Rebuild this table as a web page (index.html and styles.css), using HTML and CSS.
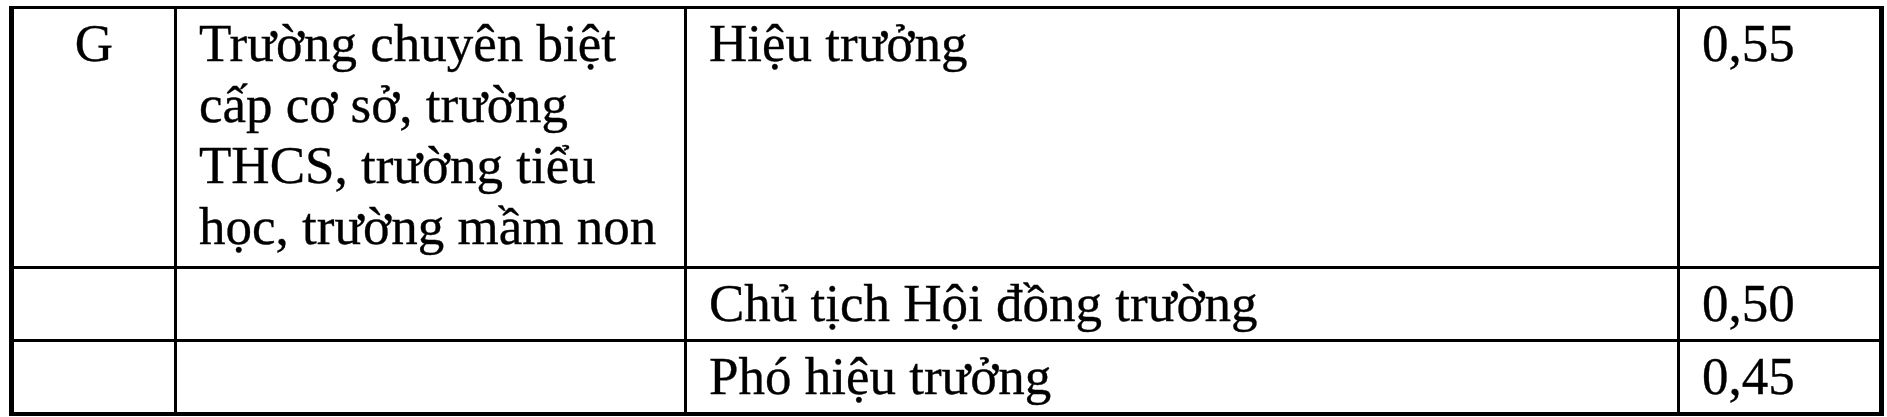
FILE: index.html
```html
<!DOCTYPE html>
<html lang="vi">
<head>
<meta charset="utf-8">
<title>Bảng hệ số</title>
<link rel="stylesheet" href="styles.css">
</head>
<body>
<table class="grid">
  <colgroup>
    <col class="c-code">
    <col class="c-unit">
    <col class="c-role">
    <col class="c-coef">
  </colgroup>
  <tbody>
    <tr class="row-main">
      <td class="code">G</td>
      <td>Trường chuyên biệt cấp cơ sở, trường THCS, trường tiểu học, trường mầm non</td>
      <td>Hiệu trưởng</td>
      <td>0,55</td>
    </tr>
    <tr>
      <td class="code"></td>
      <td></td>
      <td>Chủ tịch Hội đồng trường</td>
      <td>0,50</td>
    </tr>
    <tr>
      <td class="code"></td>
      <td></td>
      <td>Phó hiệu trưởng</td>
      <td>0,45</td>
    </tr>
  </tbody>
</table>
</body>
</html>
```

FILE: styles.css
```css
html, body {
  margin: 0;
  padding: 0;
  background: #ffffff;
}

body {
  padding: 6px 0 0 9px;
}

.grid {
  border-collapse: collapse;
  table-layout: fixed;
  width: 1870px;
  border-top: 3px solid #000;
  border-left: 5px solid #000;
  border-right: 5px solid #000;
  border-bottom: 4px solid #000;
  font-family: "Liberation Serif", "Times New Roman", serif;
  font-size: 53px;
  line-height: 61px;
  color: #000;
  -webkit-text-stroke: 0.35px #000;
}

.c-code { width: 164px; }
.c-unit { width: 510px; }
.c-role { width: 993px; }
.c-coef { width: 203px; }

.grid td {
  border: 3px solid #000;
  vertical-align: top;
  padding: 4px 20px 5px 22px;
  height: 61px;
}

.grid td.code {
  text-align: center;
  padding-left: 4px;
  padding-right: 4px;
}

.row-main td {
  padding-bottom: 9px;
}
```
